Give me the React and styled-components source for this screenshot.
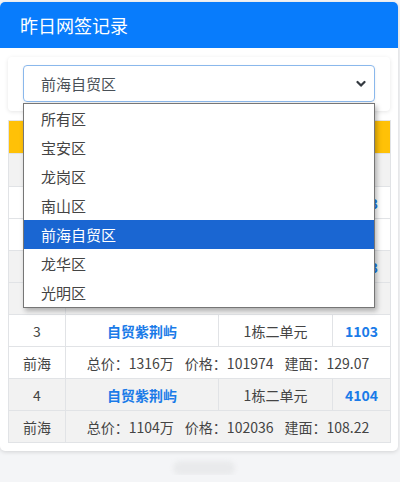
import React from "react";
import styled, { createGlobalStyle } from "styled-components";

const GlobalStyle = createGlobalStyle`
  html, body {
    margin: 0;
    padding: 0;
    background: #f4f5f7;
  }
  body {
    font-family: "Noto Sans CJK SC", "Noto Sans", sans-serif;
    color: #333;
  }
`;

const Card = styled.div`
  width: 398px;
  margin-top: 2px;
  background: #fff;
  border-radius: 5px;
  box-shadow: 0 1px 4px rgba(0, 0, 0, 0.14);
`;

const CardHeader = styled.div`
  display: flex;
  align-items: center;
  height: 46px;
  padding-left: 20px;
  background: #087cfc;
  border-radius: 5px 5px 0 0;
  color: #fff;
  font-size: 18px;
`;

const CardBody = styled.div`
  padding: 9px 8px 8px;
`;

const FilterBox = styled.div`
  padding: 8px 15px 9px 15px;
  border-radius: 4px;
  background: #fff;
  box-shadow: 0 1px 4px rgba(0, 0, 0, 0.1);
`;

const SelectWrap = styled.div`
  position: relative;
`;

const SelectBox = styled.div`
  display: flex;
  align-items: center;
  justify-content: space-between;
  height: 37px;
  box-sizing: border-box;
  padding: 0 8px 0 17px;
  border: 1px solid #8ab8ec;
  border-radius: 4px;
  box-shadow: 0 1px 3px rgba(0, 0, 0, 0.08);
  font-size: 15px;
  color: #495057;
`;

const OptionList = styled.ul`
  position: absolute;
  top: 100%;
  left: 0;
  right: 0;
  z-index: 5;
  margin: 1px 0 0;
  padding: 0;
  list-style: none;
  background: #fff;
  border: 1px solid #767676;
  box-shadow: 2px 3px 5px rgba(0, 0, 0, 0.28);
`;

const OptionItem = styled.li`
  height: 29px;
  line-height: 29px;
  padding-left: 17px;
  font-size: 15px;
  color: ${(p) => (p.$active ? "#fff" : "#444")};
  background: ${(p) => (p.$active ? "#1a66d2" : "transparent")};
`;

const Table = styled.table`
  width: 100%;
  margin-top: 9px;
  border-collapse: collapse;
  table-layout: fixed;
  font-size: 14px;
  color: #444;
`;

const HeadRow = styled.tr`
  height: 33px;
  background: ${(p) => p.$bg};
`;

const Row = styled.tr`
  height: 32px;
  background: ${(p) => (p.$shade ? "#f2f2f2" : "#fff")};
`;

const Cell = styled.td`
  padding: 0;
  border: 1px solid #e1e3e6;
  text-align: center;
  white-space: nowrap;
  overflow: hidden;
`;

const LinkCell = styled(Cell)`
  color: #1a7be8;
  font-weight: bold;
`;

const Part = styled.span`
  margin-right: 11px;
  &:last-child {
    margin-right: 0;
  }
`;

const Blob = styled.div`
  width: 62px;
  height: 14px;
  margin: 10px 0 0 173px;
  border-radius: 7px;
  background: #e9eaec;
  filter: blur(2px);
`;

const options = ["所有区", "宝安区", "龙岗区", "南山区", "前海自贸区", "龙华区", "光明区"];

const records = [
  { no: 1, name: "自贸紫荆屿", building: "1栋二单元", room: "1203", area: "前海", total: "1284万", price: "102105", size: "125.76" },
  { no: 2, name: "自贸紫荆屿", building: "1栋二单元", room: "2103", area: "前海", total: "1298万", price: "101870", size: "127.42" },
  { no: 3, name: "自贸紫荆屿", building: "1栋二单元", room: "1103", area: "前海", total: "1316万", price: "101974", size: "129.07" },
  { no: 4, name: "自贸紫荆屿", building: "1栋二单元", room: "4104", area: "前海", total: "1104万", price: "102036", size: "108.22" },
];

function Chevron() {
  return (
    <svg width="10" height="8" viewBox="0 0 10 8">
      <path d="M1.5 2 L5 5.6 L8.5 2" fill="none" stroke="#343a40" strokeWidth="2.2" strokeLinecap="round" strokeLinejoin="round" />
    </svg>
  );
}

export default function App() {
  const selected = "前海自贸区";
  return (
    <>
      <GlobalStyle />
      <Card>
        <CardHeader>昨日网签记录</CardHeader>
        <CardBody>
          <FilterBox>
            <SelectWrap>
              <SelectBox>
                <span>{selected}</span>
                <Chevron />
              </SelectBox>
              <OptionList>
                {options.map((o) => (
                  <OptionItem key={o} $active={o === selected}>
                    {o}
                  </OptionItem>
                ))}
              </OptionList>
            </SelectWrap>
          </FilterBox>
          <Table>
            <colgroup>
              <col style={{ width: 57 }} />
              <col style={{ width: 153 }} />
              <col style={{ width: 114 }} />
              <col style={{ width: 58 }} />
            </colgroup>
            <thead>
              <HeadRow $bg="#ffc107">
                <Cell />
                <Cell />
                <Cell />
                <Cell />
              </HeadRow>
              <HeadRow $bg="#f2f2f2">
                <Cell />
                <Cell colSpan={3} />
              </HeadRow>
            </thead>
            <tbody>
              {records.map((r) => (
                <React.Fragment key={r.no}>
                  <Row $shade={r.no % 2 === 0}>
                    <Cell>{r.no}</Cell>
                    <LinkCell>{r.name}</LinkCell>
                    <Cell>{r.building}</Cell>
                    <LinkCell>{r.room}</LinkCell>
                  </Row>
                  <Row $shade={r.no % 2 === 0}>
                    <Cell>{r.area}</Cell>
                    <Cell colSpan={3}>
                      <Part>总价：{r.total}</Part>
                      <Part>价格：{r.price}</Part>
                      <Part>建面：{r.size}</Part>
                    </Cell>
                  </Row>
                </React.Fragment>
              ))}
            </tbody>
          </Table>
        </CardBody>
      </Card>
      <Blob />
    </>
  );
}
